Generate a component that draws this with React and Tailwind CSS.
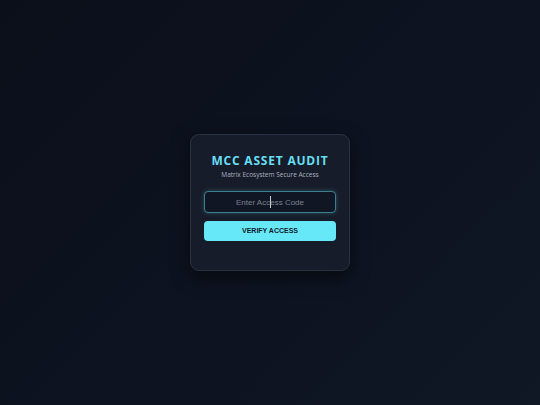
import React from "react";

const App = () => {
  return (
    <div className="w-[540px] h-[405px] flex items-center justify-center bg-[linear-gradient(135deg,#0b0f1a_0%,#0d1320_55%,#0f1824_100%)]">
      <div className="w-[160px] rounded-[9px] border border-[#2a3242] bg-[#171c2a] px-[13px] pt-[18px] pb-[29px] shadow-[0_6px_18px_rgba(0,0,0,0.55)] flex flex-col items-center">
        <h1
          className="text-[12px] leading-[16px] font-bold tracking-[0.8px] text-[#67dff2] mb-[1px]"
          style={{ fontFamily: "'Open Sans', sans-serif" }}
        >
          MCC ASSET AUDIT
        </h1>
        <p
          className="text-[6.5px] leading-[10px] text-[#aab2c0] mb-[11px]"
          style={{ fontFamily: "'Open Sans', sans-serif" }}
        >
          Matrix Ecosystem Secure Access
        </p>
        <div className="relative flex w-full h-[22px]">
          <input
            type="text"
            placeholder="Enter Access Code"
            className="block w-full h-[22px] rounded-[4px] border border-[#3d7f8f] bg-[#111624] text-center text-[8px] text-white placeholder:text-[#7a8290] outline-none shadow-[0_0_4px_rgba(103,232,249,0.25)]"
            style={{ fontFamily: "'Liberation Sans', Arial, sans-serif" }}
          />
          <span className="absolute left-[66px] top-[5px] bottom-[5px] w-px bg-[#c8cdd4]" />
        </div>
        <button
          className="mt-[8px] w-full h-[20px] rounded-[4px] bg-[#67e8f9] text-[7px] font-bold text-[#0f1a2a]"
          style={{ fontFamily: "'Liberation Sans', Arial, sans-serif" }}
        >
          VERIFY ACCESS
        </button>
      </div>
    </div>
  );
};

export default App;
